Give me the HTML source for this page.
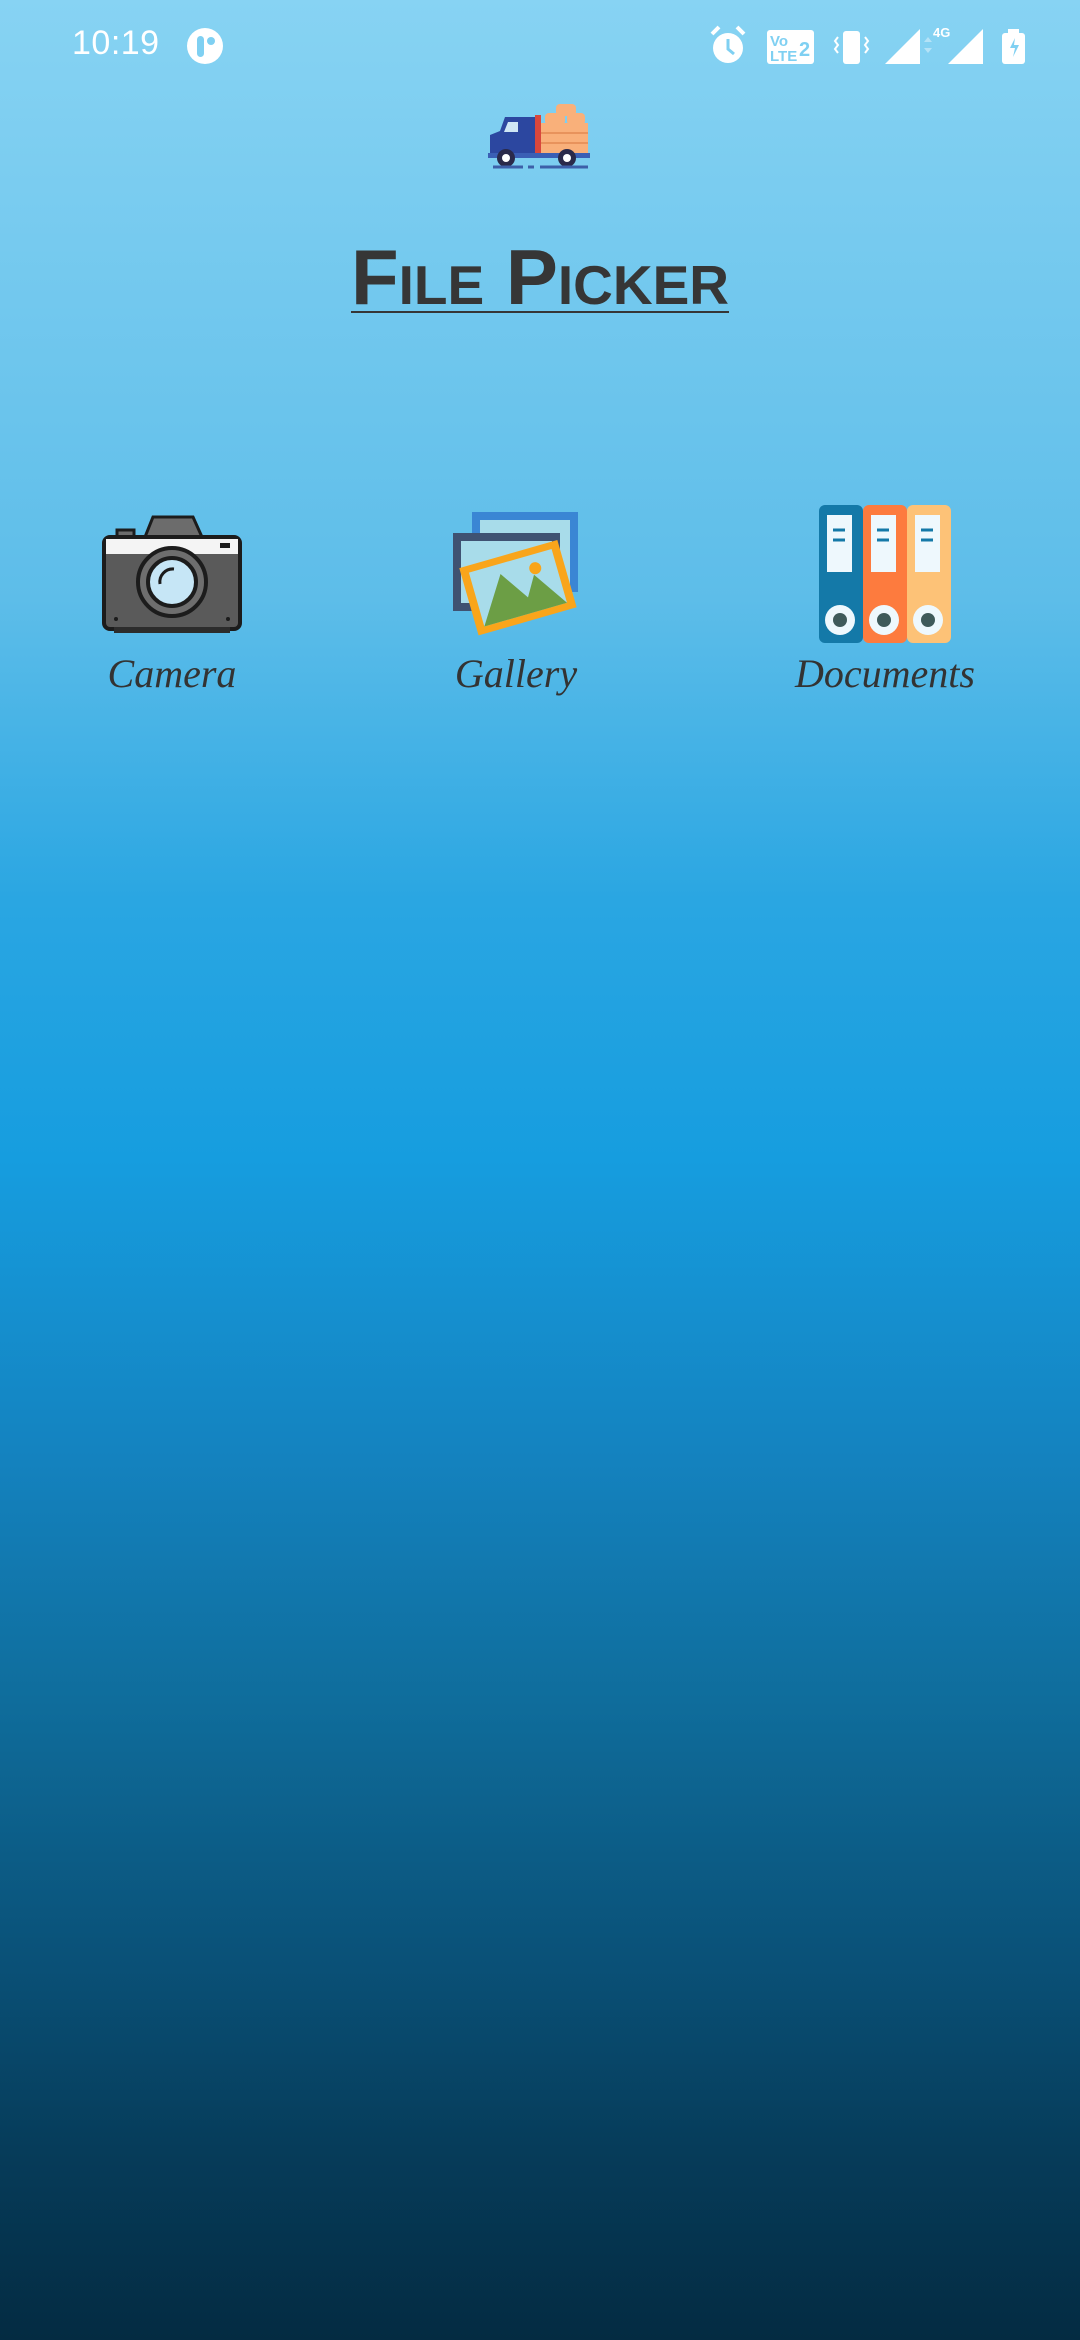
<!DOCTYPE html>
<html><head><meta charset="utf-8"><style>
html,body{margin:0;padding:0}
body{width:1080px;height:2340px;position:relative;overflow:hidden;
background:linear-gradient(to bottom,#87d3f3 0px,#5dbde9 600px,#2aa6e2 900px,#169ddf 1160px,#1483c0 1450px,#0f6d9c 1700px,#0a5279 1950px,#063c5a 2150px,#042b42 2340px);
font-family:"Liberation Sans",sans-serif}
.abs{position:absolute}
.time{left:72px;top:24px;color:#fff;font-size:34px;letter-spacing:0.5px}
.title{left:0;width:1080px;top:232px;text-align:center;font-size:78px;font-weight:bold;font-variant:small-caps;color:#363636;line-height:90px}
.title span{border-bottom:2px solid #363636;line-height:68px;display:inline-block}
.lbl{font-family:"Liberation Serif",serif;font-style:italic;font-size:40px;color:#333;top:650px;width:300px;text-align:center}
</style></head><body>
<div class="abs time">10:19</div>
<svg class="abs" style="left:186px;top:27px" width="38" height="38" viewBox="0 0 38 38"><circle cx="19" cy="19" r="18" fill="#fff"/><rect x="11" y="9" width="7" height="21" rx="3.5" fill="#7fd0f2"/><circle cx="25" cy="14" r="4" fill="#7fd0f2"/></svg>
<svg class="abs" style="left:700px;top:20px" width="340" height="60" viewBox="0 0 340 60">
<g fill="#fff">
<circle cx="28" cy="28" r="15"/><path d="M12 14l7-7M44 14l-7-7" stroke="#fff" stroke-width="4"/>
<path d="M28 19v10l6 5" stroke="#7fd0f2" stroke-width="3" fill="none"/>
<rect x="67" y="10" width="47" height="34" rx="3"/>
<text x="70" y="26" font-size="15" font-weight="bold" fill="#7fd0f2" font-family="Liberation Sans">Vo</text>
<text x="70" y="41" font-size="15" font-weight="bold" fill="#7fd0f2" font-family="Liberation Sans">LTE</text>
<text x="99" y="36" font-size="20" font-weight="bold" fill="#7fd0f2" font-family="Liberation Sans">2</text>
<rect x="143" y="11" width="17" height="33" rx="3"/>
<path d="M138 17l-3 4 3 4-3 4 3 4M165 17l3 4-3 4 3 4-3 4" stroke="#fff" stroke-width="2" fill="none"/>
<path d="M185 44L220 9V44Z"/>
<path d="M248 44L283 9V44Z"/>
<path d="M224 22l4-5 4 5zM224 28l4 5 4-5z" fill="#b5e3f7"/>
<text x="233" y="17" font-size="13" font-weight="bold" font-family="Liberation Sans">4G</text>
<rect x="302" y="13" width="23" height="31" rx="3"/><rect x="308" y="9" width="11" height="5"/>
<path d="M315 18l-5 10h5l-2 9 6-12h-5z" fill="#7fd0f2"/>
</g></svg>
<svg class="abs" style="left:485px;top:100px" width="110" height="75" viewBox="0 0 110 75">
<rect x="55" y="23" width="48" height="33" fill="#f9b07a"/>
<path d="M55 33h48M55 43h48" stroke="#e8935c" stroke-width="2"/>
<rect x="60" y="13" width="20" height="12" rx="4" fill="#f9b07a"/><rect x="82" y="13" width="18" height="12" rx="4" fill="#f9b07a"/><rect x="71" y="4" width="20" height="12" rx="4" fill="#f9b07a"/>
<rect x="50" y="15" width="6" height="40" fill="#d9473c"/>
<path d="M5 57V35l10-4 5-14h30v40z" fill="#2c47a0"/>
<path d="M23 22h10v10H19z" fill="#cfe6f5"/>
<rect x="3" y="53" width="102" height="5" fill="#3a5fb5"/>
<circle cx="21" cy="58" r="9" fill="#2a2a4a"/><circle cx="21" cy="58" r="4" fill="#fff"/>
<circle cx="82" cy="58" r="9" fill="#2a2a4a"/><circle cx="82" cy="58" r="4" fill="#fff"/>
<path d="M8 67h30M43 67h6M55 67h48" stroke="#3d5fa8" stroke-width="3"/>
</svg>
<div class="abs title"><span>File Picker</span></div>
<svg class="abs" style="left:100px;top:512px" width="145" height="125" viewBox="0 0 145 125">
<path d="M45 25l8-20h40l9 20z" fill="#6c6c6c" stroke="#1c1c1c" stroke-width="3"/>
<rect x="17" y="18" width="17" height="9" fill="#6c6c6c" stroke="#1c1c1c" stroke-width="3"/>
<rect x="4" y="25" width="136" height="92" rx="6" fill="#5a5a5a" stroke="#1c1c1c" stroke-width="4"/>
<rect x="6" y="27" width="132" height="15" fill="#f4f4f4"/>
<rect x="120" y="31" width="10" height="5" fill="#1c1c1c"/>
<rect x="14" y="115" width="116" height="6" fill="#2c2c2c"/>
<circle cx="72" cy="70" r="34" fill="#6e6e6e" stroke="#1c1c1c" stroke-width="4"/>
<circle cx="72" cy="70" r="24" fill="#c6e6f6" stroke="#1c1c1c" stroke-width="4"/>
<path d="M60 72a13 13 0 0 1 14-15" stroke="#1c1c1c" stroke-width="3" fill="none"/>
<circle cx="16" cy="107" r="2" fill="#1c1c1c"/><circle cx="128" cy="107" r="2" fill="#1c1c1c"/>
</svg>
<div class="abs lbl" style="left:22px">Camera</div>
<svg class="abs" style="left:450px;top:508px" width="135" height="135" viewBox="0 0 135 135">
<rect x="22" y="4" width="106" height="80" fill="#3a86d4"/><rect x="30" y="12" width="90" height="66" fill="#a8dcea"/>
<rect x="3" y="25" width="107" height="78" fill="#3f5272"/><rect x="11" y="33" width="91" height="62" fill="#a8dcea"/>
<g transform="rotate(-16 67 80)">
<rect x="17" y="45" width="102" height="70" fill="#f9a51b"/>
<rect x="25" y="52" width="86" height="56" fill="#a8dcea"/>
<path d="M25 108L55 62l20 30 12-20 24 36z" fill="#6c9e45"/>
<circle cx="90" cy="66" r="6" fill="#f9a51b"/>
</g>
</svg>
<div class="abs lbl" style="left:366px">Gallery</div>
<svg class="abs" style="left:815px;top:503px" width="140" height="145" viewBox="0 0 140 145">
<rect x="4" y="2" width="44" height="138" rx="6" fill="#1479a8"/>
<rect x="48" y="2" width="44" height="138" rx="6" fill="#fd7b3e"/>
<rect x="92" y="2" width="44" height="138" rx="6" fill="#fdc277"/>
<g fill="#eef8fd"><rect x="12" y="12" width="25" height="57"/><rect x="56" y="12" width="25" height="57"/><rect x="100" y="12" width="25" height="57"/>
<circle cx="25" cy="117" r="15"/><circle cx="69" cy="117" r="15"/><circle cx="113" cy="117" r="15"/></g>
<g fill="#3f5a5a"><circle cx="25" cy="117" r="7"/><circle cx="69" cy="117" r="7"/><circle cx="113" cy="117" r="7"/></g>
<g stroke="#1479a8" stroke-width="3"><path d="M18 27h12M18 37h12M62 27h12M62 37h12M106 27h12M106 37h12"/></g>
</svg>
<div class="abs lbl" style="left:735px">Documents</div>
</body></html>
